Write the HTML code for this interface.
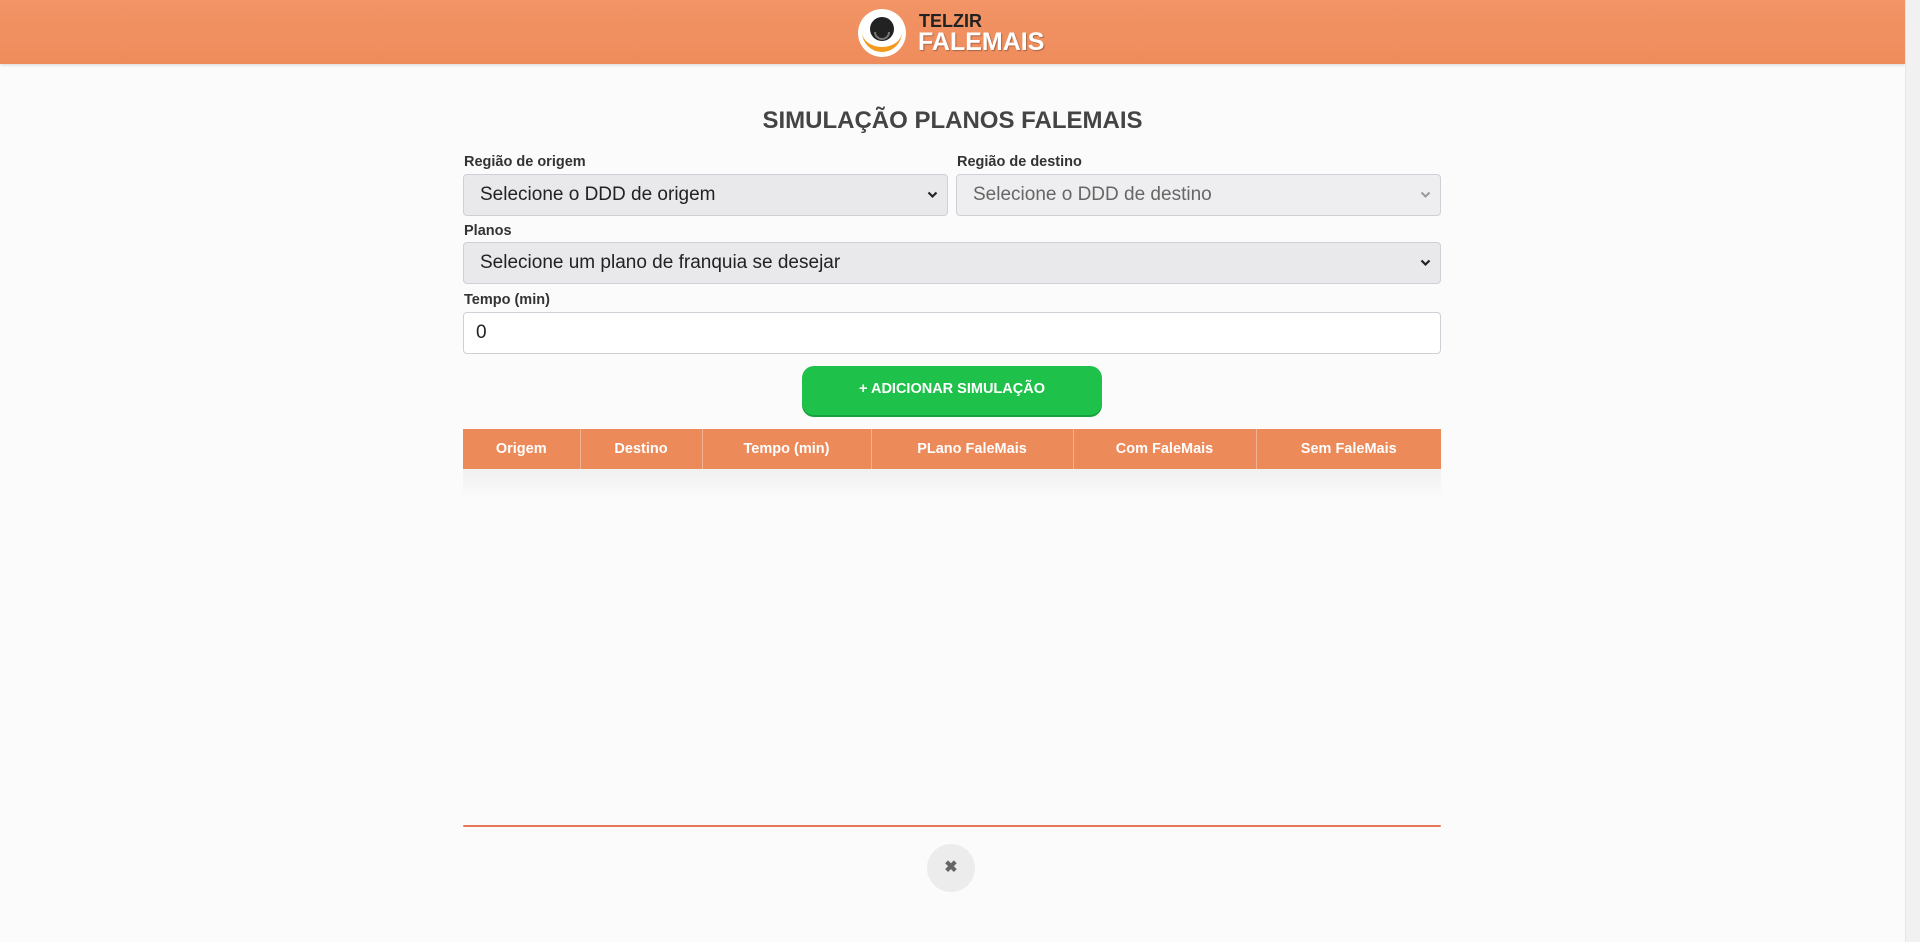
<!DOCTYPE html>
<html><head><meta charset="utf-8"><style>
*{box-sizing:border-box;margin:0;padding:0}
html,body{width:1920px;height:942px;overflow:hidden;background:#fbfbfb;font-family:"Liberation Sans",sans-serif}
.sb{position:absolute;right:0;top:0;width:15px;height:942px;background:#f1f1f1;border-left:1px solid #e6e6e6}
.hdr{position:absolute;left:0;top:0;width:1905px;height:64px;background:linear-gradient(#f29466,#ef8c5c);box-shadow:0 1px 3px rgba(0,0,0,.15)}
.title{position:absolute;left:0;width:1905px;top:107px;text-align:center;font-size:24px;font-weight:bold;color:#444}
.lbl{position:absolute;font-size:14.5px;font-weight:bold;color:#333}
.sel{position:absolute;height:42px;background:#e9e9ec;border:1px solid #cfcfd6;border-radius:4px;font-size:19px;color:#222;padding:0 16px;line-height:40px}
.sel svg{position:absolute;right:9px;top:16px}
.btn{position:absolute;left:802px;top:366px;width:300px;height:49px;background:#1ec24a;border-radius:12px;color:#fff;font-weight:bold;font-size:14.5px;text-align:center;line-height:46px;box-shadow:0 2px 0 #17a13c}
table{position:absolute;left:463px;top:429px;width:978px;border-collapse:collapse}
th{background:#ec8a5a;color:#fff;font-size:14.5px;height:40px;border-right:1px solid #f3b391;font-weight:bold}
th:last-child{border-right:none}
</style></head><body>
<div class="hdr">
<svg style="position:absolute;left:857px;top:8px" width="50" height="50" viewBox="0 0 50 50"><circle cx="25" cy="25" r="24" fill="#fff"/><path d="M5 24a20 20 0 0 0 40 0a20 15 0 0 1 -40 0z" fill="#f39a1e"/><circle cx="25" cy="21" r="12" fill="#222"/><path d="M18 24a7 7 0 0 0 14 0" stroke="#777" stroke-width="2" fill="none"/></svg>
<div style="position:absolute;left:919px;top:12px;font-size:18px;font-weight:bold;color:#222;line-height:18px">TELZIR</div>
<div style="position:absolute;left:918px;top:29px;font-size:25px;font-weight:bold;color:#fff;line-height:26px;text-shadow:1px 1px 1px rgba(0,0,0,.3)">FALEMAIS</div>
</div>
<div class="sb"></div>
<div class="title">SIMULAÇÃO PLANOS FALEMAIS</div>
<div class="lbl" style="left:464px;top:154px">Região de origem</div>
<div class="lbl" style="left:957px;top:154px">Região de destino</div>
<div class="sel" style="left:463px;top:174px;width:485px">Selecione o DDD de origem<svg width="11" height="8" viewBox="0 0 11 8"><path d="M1.5 1.5l4 4 4-4" stroke="#222" stroke-width="2.2" fill="none"/></svg></div>
<div class="sel" style="left:956px;top:174px;width:485px;color:#666;background:#eeeef0">Selecione o DDD de destino<svg width="11" height="8" viewBox="0 0 11 8"><path d="M1.5 1.5l4 4 4-4" stroke="#999" stroke-width="2" fill="none"/></svg></div>
<div class="lbl" style="left:464px;top:223px">Planos</div>
<div class="sel" style="left:463px;top:242px;width:978px">Selecione um plano de franquia se desejar<svg width="11" height="8" viewBox="0 0 11 8"><path d="M1.5 1.5l4 4 4-4" stroke="#222" stroke-width="2.2" fill="none"/></svg></div>
<div class="lbl" style="left:464px;top:292px">Tempo (min)</div>
<div class="sel" style="left:463px;top:312px;width:978px;background:#fff;padding-left:12px">0</div>
<div class="btn">+ ADICIONAR SIMULAÇÃO</div>
<table><tr><th style="width:117px">Origem</th><th style="width:122px">Destino</th><th style="width:169px">Tempo (min)</th><th style="width:202px">PLano FaleMais</th><th style="width:183px">Com FaleMais</th><th>Sem FaleMais</th></tr></table>
<div style="position:absolute;left:463px;top:469px;width:978px;height:30px;background:linear-gradient(#f0f0f0,#fbfbfb)"></div>
<div style="position:absolute;left:463px;top:825px;width:978px;height:2px;background:#e8775a;border-radius:2px"></div>
<div style="position:absolute;left:927px;top:844px;width:48px;height:48px;border-radius:50%;background:#ececec;text-align:center;line-height:48px;color:#666;font-size:16px;font-weight:bold">&#10006;</div>
</body></html>
